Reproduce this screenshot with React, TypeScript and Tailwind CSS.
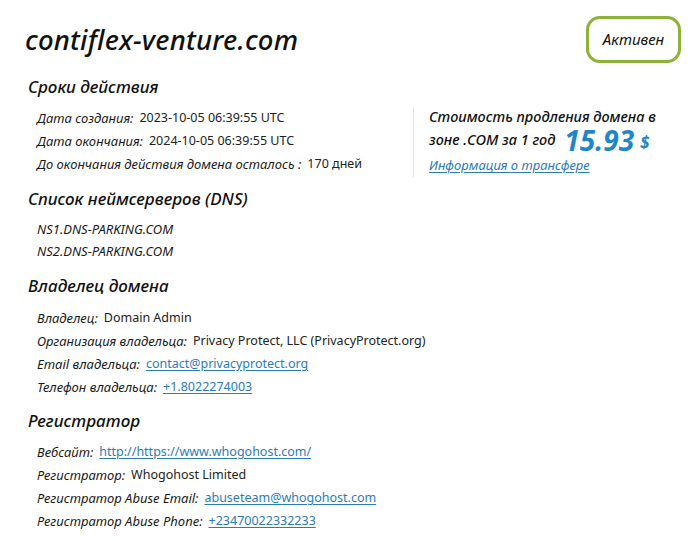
import React from "react";

const label = "italic text-[13px] text-[#1a1a1a]";
const value = "text-[12.5px] text-[#222]";
const link = "text-[12.5px] text-[#2b7bb9] underline underline-offset-2";

function Row({ name, children }: { name: string; children: React.ReactNode }) {
  return (
    <div className="flex h-[23px] items-center gap-[6px]">
      <span className={label}>{name}:</span>
      {children}
    </div>
  );
}

function Heading({ children }: { children: React.ReactNode }) {
  return <h2 className="italic text-[17px] font-medium text-[#111] leading-none">{children}</h2>;
}

export default function App() {
  return (
    <div
      className="w-[698px] h-[541px] bg-white overflow-hidden"
      style={{ fontFamily: '"Noto Sans", sans-serif' }}
    >
      <div className="flex items-start justify-between pl-[25px] pr-[17px] pt-[16px]">
        <h1 className="italic text-[27.5px] font-medium text-[#111] mt-[10px] leading-none tracking-[0.2px]">
          contiflex-venture.com
        </h1>
        <div className="flex h-[47px] w-[95px] items-center justify-center rounded-[14px] border-[3px] border-[#8cb238]">
          <span className="italic text-[15px] text-[#111]">Активен</span>
        </div>
      </div>

      <div className="pl-[28px] mt-[15px]">
        <Heading>Сроки действия</Heading>
        <div className="flex h-[70px] mt-[12px]">
          <div className="w-[385px] pl-[9px]">
            <Row name="Дата создания">
              <span className={value}>2023-10-05 06:39:55 UTC</span>
            </Row>
            <Row name="Дата окончания">
              <span className={value}>2024-10-05 06:39:55 UTC</span>
            </Row>
            <Row name="До окончания действия домена осталось ">
              <span className={value}>170 дней</span>
            </Row>
          </div>
          <div className="h-[70px] border-l border-[#e4e4e4] pl-[15px]">
            <div className="flex h-[19px] items-center italic text-[14.5px] font-medium text-[#111]">
              Стоимость продления домена в
            </div>
            <div className="flex h-[28px] items-center italic text-[14.5px] font-medium text-[#111]">
              <span>зоне .COM за 1 год</span>
              <span className="ml-[9px] text-[28px] font-bold text-[#1f86c7] leading-[20px]">15.93</span>
              <span className="ml-[6px] mt-[4px] text-[17px] font-bold text-[#1f86c7] leading-none">$</span>
            </div>
            <div className="flex h-[23px] items-center">
              <a className="italic text-[13px] text-[#2b7bb9] underline underline-offset-2">
                Информация о трансфере
              </a>
            </div>
          </div>
        </div>

        <div className="mt-[13px]">
          <Heading>Список неймсерверов (DNS)</Heading>
          <div className="pl-[9px] mt-[12px]">
            <div className="flex h-[22px] items-center italic text-[13px] text-[#1a1a1a]">NS1.DNS-PARKING.COM</div>
            <div className="flex h-[22px] items-center italic text-[13px] text-[#1a1a1a]">NS2.DNS-PARKING.COM</div>
          </div>
        </div>

        <div className="mt-[14px]">
          <Heading>Владелец домена</Heading>
          <div className="pl-[9px] mt-[13px]">
            <Row name="Владелец">
              <span className={value}>Domain Admin</span>
            </Row>
            <Row name="Организация владельца">
              <span className={value}>Privacy Protect, LLC (PrivacyProtect.org)</span>
            </Row>
            <Row name="Email владельца">
              <a className={link}>contact@privacyprotect.org</a>
            </Row>
            <Row name="Телефон владельца">
              <a className={link}>+1.8022274003</a>
            </Row>
          </div>
        </div>

        <div className="mt-[13px]">
          <Heading>Регистратор</Heading>
          <div className="pl-[9px] mt-[12px]">
            <Row name="Вебсайт">
              <a className={link}>http://https://www.whogohost.com/</a>
            </Row>
            <Row name="Регистратор">
              <span className={value}>Whogohost Limited</span>
            </Row>
            <Row name="Регистратор Abuse Email">
              <a className={link}>abuseteam@whogohost.com</a>
            </Row>
            <Row name="Регистратор Abuse Phone">
              <a className={link}>+23470022332233</a>
            </Row>
          </div>
        </div>
      </div>
    </div>
  );
}
